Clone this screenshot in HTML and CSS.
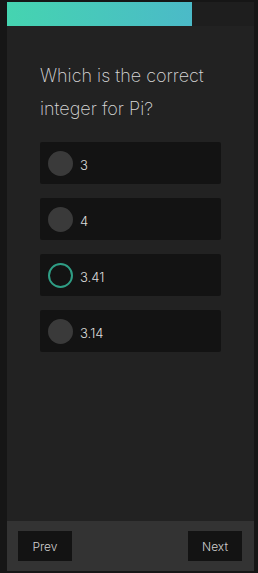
FILE: index.html
```html
<!DOCTYPE html>
<html>
<head>
<meta charset="utf-8">
<link rel="stylesheet" href="styles.css">
</head>
<body>
<div class="page">
  <div class="quiz">
    <div class="progress"><div class="progress-fill" style="width:185px"></div></div>
    <div class="content">
      <h1 class="question">Which is the correct integer for Pi?</h1>
      <div class="options">
        <div class="option"><span class="radio"></span><span class="label">3</span></div>
        <div class="option"><span class="radio"></span><span class="label">4</span></div>
        <div class="option"><span class="radio selected"></span><span class="label">3.41</span></div>
        <div class="option"><span class="radio"></span><span class="label">3.14</span></div>
      </div>
    </div>
    <div class="footer">
      <button class="btn">Prev</button>
      <button class="btn">Next</button>
    </div>
  </div>
</div>
</body>
</html>
```
FILE: styles.css
```css
html, body {
  margin: 0;
  padding: 0;
  background: #161616;
  font-family: "Inter", "Lato", sans-serif;
}
.page {
  padding: 2px 4px 2px 7px;
  height: 573px;
  box-sizing: border-box;
}
.quiz {
  width: 247px;
  height: 569px;
  background: #222222;
  display: flex;
  flex-direction: column;
}
.progress {
  height: 24px;
  background: #1e1e1e;
}
.progress-fill {
  height: 100%;
  background: linear-gradient(90deg, #45d4b0, #4bbac8);
}
.content {
  flex: 1;
  padding: 33px 20px 0 33px;
}
.question {
  margin: 0;
  font-size: 18px;
  font-weight: 200;
  line-height: 33px;
  color: #d8d8d8;
}
.options {
  margin-top: 17px;
  display: flex;
  flex-direction: column;
  gap: 14px;
}
.option {
  width: 181px;
  height: 42px;
  box-sizing: border-box;
  background: #131313;
  border-radius: 2px;
  display: flex;
  align-items: center;
  padding-left: 8px;
  gap: 7px;
}
.radio {
  width: 25px;
  height: 25px;
  border-radius: 50%;
  background: #3a3a3a;
  box-sizing: border-box;
}
.radio.selected {
  background: #131313;
  border: 2px solid #2f9e85;
}
.label {
  font-size: 13px;
  font-weight: 300;
  color: #dcdcdc;
  padding-top: 3px;
}
.footer {
  height: 50px;
  background: #333333;
  display: flex;
  align-items: center;
  justify-content: space-between;
  padding: 0 12px 0 11px;
}
.btn {
  width: 54px;
  height: 30px;
  background: #131313;
  border: none;
  color: #cfcfcf;
  font-family: "Inter", "Lato", sans-serif;
  font-size: 12px;
  font-weight: 300;
  padding: 0;
}
```
